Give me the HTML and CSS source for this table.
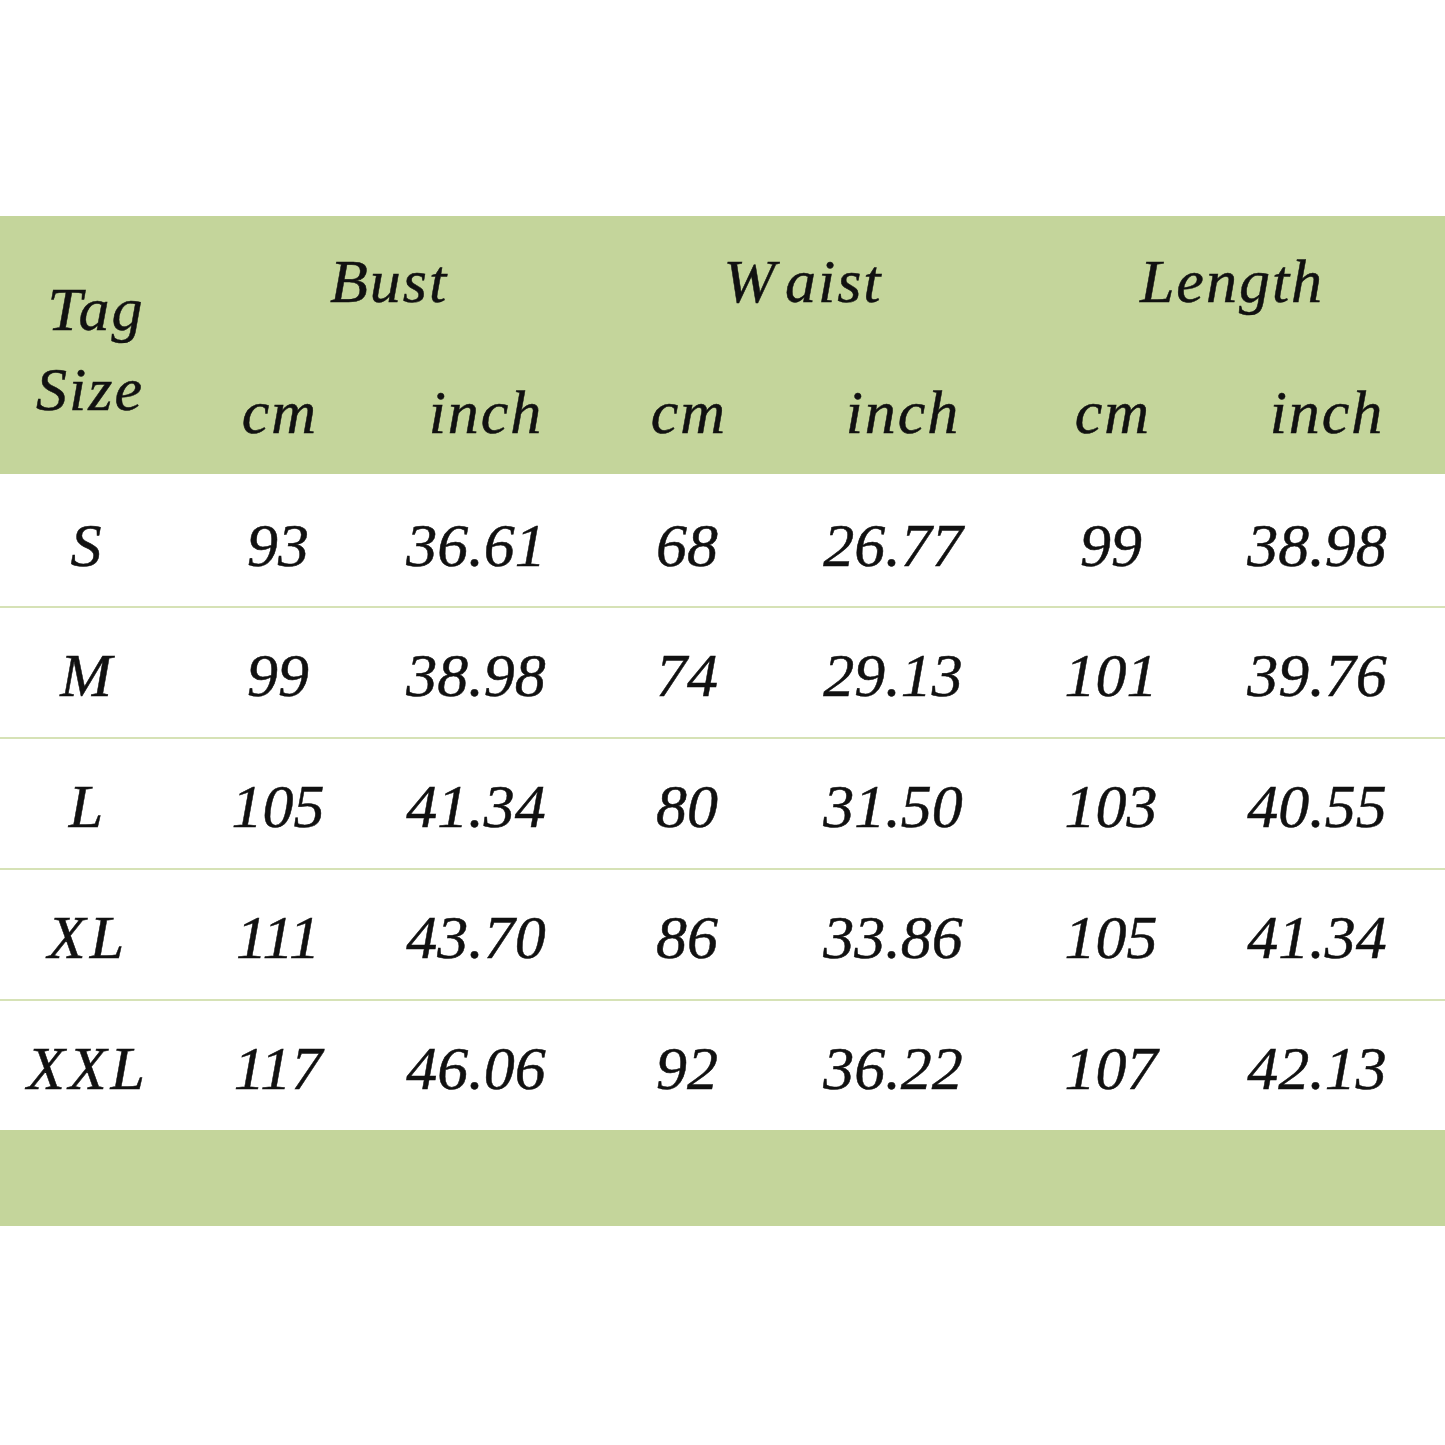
FILE: index.html
```html
<!DOCTYPE html>
<html>
<head>
<meta charset="utf-8">
<link rel="stylesheet" href="styles.css">
</head>
<body>
<div class="page">
  <div class="table">
    <div class="head">
      <div class="tag"><span>Tag</span><span class="size">Size</span></div>
      <div class="grp g-bust">Bust</div>
      <div class="grp g-waist"><span class="w">W</span>aist</div>
      <div class="grp g-length">Length</div>
      <div class="unit">cm</div>
      <div class="unit in">inch</div>
      <div class="unit">cm</div>
      <div class="unit in">inch</div>
      <div class="unit">cm</div>
      <div class="unit in">inch</div>
    </div>
    <div class="row first"><div class="lab">S</div><div>93</div><div>36.61</div><div>68</div><div>26.77</div><div>99</div><div>38.98</div></div>
    <div class="row"><div class="lab">M</div><div>99</div><div>38.98</div><div>74</div><div>29.13</div><div>101</div><div>39.76</div></div>
    <div class="row"><div class="lab">L</div><div>105</div><div>41.34</div><div>80</div><div>31.50</div><div>103</div><div>40.55</div></div>
    <div class="row"><div class="lab">XL</div><div>111</div><div>43.70</div><div>86</div><div>33.86</div><div>105</div><div>41.34</div></div>
    <div class="row last"><div class="lab">XXL</div><div>117</div><div>46.06</div><div>92</div><div>36.22</div><div>107</div><div>42.13</div></div>
    <div class="foot"></div>
  </div>
</div>
</body>
</html>
```
FILE: styles.css
```css
html, body {
  margin: 0;
  padding: 0;
  background: #ffffff;
}
.page {
  width: 1445px;
  height: 1445px;
  padding-top: 216px;
  box-sizing: border-box;
  font-family: "Liberation Serif", "Times New Roman", serif;
  font-style: italic;
  font-size: 62px;
  line-height: 62px;
  color: #111111;
  -webkit-text-stroke: 0.5px #111111;
}
.table {
  display: flex;
  flex-direction: column;
}
.head, .row {
  display: grid;
  grid-template-columns: 176px 204px 192px 230px 182px 254px 158px 49px;
}
.head {
  background: #c4d59b;
  height: 258px;
  grid-template-rows: 130px 128px;
  letter-spacing: 2px;
}
.tag {
  grid-row: 1 / 3;
  grid-column: 1;
  display: flex;
  flex-direction: column;
  align-items: center;
  padding-top: 62px;
  padding-left: 4px;
  gap: 18px;
}
.tag span { display: block; margin-left: 12px; }
.tag .size { margin-left: 0; }
.grp {
  grid-row: 1;
  padding-top: 34px;
  text-align: center;
}
.g-bust { grid-column: 2 / 4; padding-left: 30px; }
.g-waist { grid-column: 4 / 6; padding-left: 50px; }
.g-length { grid-column: 6 / 8; padding-left: 84px; }
.w { letter-spacing: 0.16em; }
.unit {
  grid-row: 2;
  padding-top: 35px;
  text-align: center;
  padding-left: 4px;
}
.unit.in { padding-left: 20px; }
.row {
  height: 129px;
  border-bottom: 2px solid #d6e2b6;
}
.row > div {
  padding-top: 36px;
  text-align: center;
}
.row > .lab {
  letter-spacing: 4px;
  padding-left: 0;
}
.row.first {
  height: 132px;
}
.row.first > div { padding-top: 40px; }
.row.last {
  border-bottom: none;
}
.foot {
  height: 96px;
  background: #c4d59b;
}
```
